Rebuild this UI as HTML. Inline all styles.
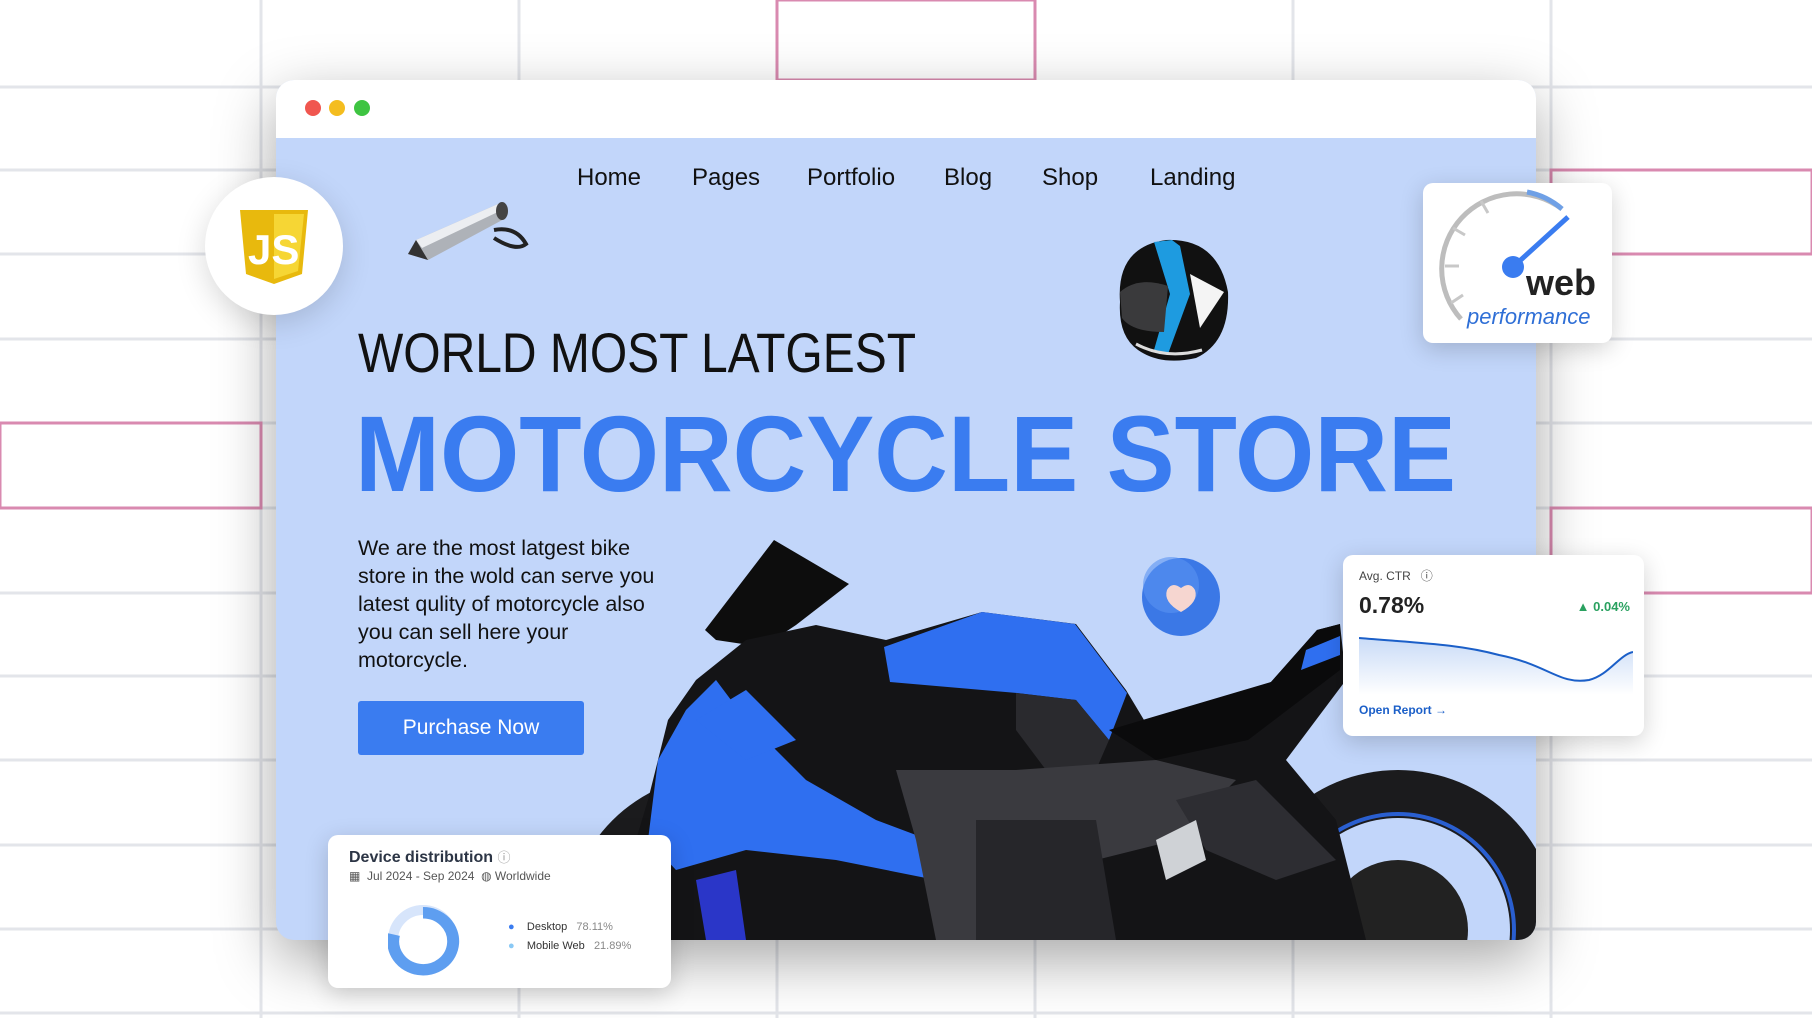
<!DOCTYPE html>
<html><head><meta charset="utf-8"><style>
*{margin:0;padding:0;box-sizing:border-box}
html,body{width:1812px;height:1018px;overflow:hidden}
body{background:#fff;position:relative;font-family:"Liberation Sans",sans-serif}
.abs{position:absolute}
.win{left:276px;top:80px;width:1260px;height:860px;border-radius:18px;overflow:hidden;background:#c2d6fa;box-shadow:0 20px 60px rgba(0,0,0,.35)}
.bar{position:absolute;left:0;top:0;width:100%;height:58px;background:#fff}
.dot{position:absolute;top:20px;width:16px;height:16px;border-radius:50%}
.nav{position:absolute;top:84px;font-size:24px;color:#111}
.card{position:absolute;background:#fff;border-radius:10px;box-shadow:0 6px 24px rgba(0,0,0,.18);overflow:hidden}
</style></head><body>
<svg class="abs" style="left:0;top:0" width="1812" height="1018">
<g stroke="#e3e5ea" stroke-width="3">
<line x1="261" y1="0" x2="261" y2="1018"/><line x1="519" y1="0" x2="519" y2="1018"/><line x1="777" y1="0" x2="777" y2="1018"/><line x1="1035" y1="0" x2="1035" y2="1018"/><line x1="1293" y1="0" x2="1293" y2="1018"/><line x1="1551" y1="0" x2="1551" y2="1018"/>
<line x1="0" y1="87" x2="1812" y2="87"/><line x1="0" y1="170" x2="1812" y2="170"/><line x1="0" y1="254" x2="1812" y2="254"/><line x1="0" y1="339" x2="1812" y2="339"/><line x1="0" y1="423" x2="1812" y2="423"/><line x1="0" y1="508" x2="1812" y2="508"/><line x1="0" y1="593" x2="1812" y2="593"/><line x1="0" y1="676" x2="1812" y2="676"/><line x1="0" y1="760" x2="1812" y2="760"/><line x1="0" y1="845" x2="1812" y2="845"/><line x1="0" y1="929" x2="1812" y2="929"/><line x1="0" y1="1013" x2="1812" y2="1013"/>
</g>
<g fill="none" stroke="#d98ab0" stroke-width="3">
<rect x="777" y="0" width="258" height="80"/><rect x="1551" y="170" width="261" height="84"/><rect x="1551" y="508" width="261" height="85"/><rect x="0" y="423" width="261" height="85"/>
</g>
</svg>

<div class="abs win">
<div class="bar"></div>
<div class="dot" style="left:29px;background:#f0564f"></div>
<div class="dot" style="left:53px;background:#f4bd1f"></div>
<div class="dot" style="left:78px;background:#3ec441"></div>
<div class="nav" style="left:301px">Home</div>
<div class="nav" style="left:416px">Pages</div>
<div class="nav" style="left:531px">Portfolio</div>
<div class="nav" style="left:668px">Blog</div>
<div class="nav" style="left:766px">Shop</div>
<div class="nav" style="left:874px">Landing</div>

<svg class="abs" style="left:0;top:0" width="1260" height="860">
<text x="82" y="292" font-family="Liberation Sans" font-size="56" fill="#111" textLength="558" lengthAdjust="spacingAndGlyphs">WORLD MOST LATGEST</text>
<text x="79" y="411" font-family="Liberation Sans" font-weight="bold" font-size="108" fill="#3a7cf0" textLength="1101" lengthAdjust="spacingAndGlyphs">MOTORCYCLE STORE</text>
<!-- exhaust -->
<g transform="translate(130,112)">
<path d="M2 62 L10 48 L92 12 L100 26 L22 68 Z" fill="#aeb2b8"/>
<path d="M10 48 L92 12 L96 18 L16 56 Z" fill="#eceef1"/>
<path d="M2 62 L10 48 L22 68Z" fill="#333"/>
<ellipse cx="96" cy="19" rx="6" ry="9" fill="#444"/>
<path d="M88 38 q22 -4 32 14 q-10 8 -32 -6" fill="none" stroke="#222" stroke-width="4"/>
</g>
<!-- helmet -->
<g transform="translate(830,152)">
<path d="M14 70 Q10 15 60 8 Q112 6 122 60 Q124 110 90 126 Q55 134 32 118 Q12 104 14 70Z" fill="#111"/>
<path d="M48 10 L66 8 L74 14 L84 62 L62 122 L48 118 L64 62Z" fill="#1e9be0"/>
<path d="M14 60 Q32 44 62 54 L58 100 Q26 100 16 86Z" fill="#3a3a3c"/>
<path d="M84 42 L118 60 L94 96Z" fill="#f4f4f4"/>
<path d="M30 112 Q60 128 96 118" fill="none" stroke="#ddd" stroke-width="3"/>
</g>
<!-- heart bubble -->
<circle cx="905" cy="517" r="39" fill="#3b78e6"/>
<circle cx="895" cy="505" r="28" fill="#5a93f2" opacity=".6"/>
<path d="M905 532 q-18 -10 -14 -22 q5 -9 14 -2 q9 -7 14 2 q4 12 -14 22z" fill="#f6d6d0"/>
<!-- motorcycle -->
<g>
<!-- rear wheel -->
<circle cx="1122" cy="850" r="160" fill="#1b1b1d"/>
<circle cx="1122" cy="850" r="112" fill="#c2d6fa"/>
<circle cx="1122" cy="850" r="116" fill="none" stroke="#2a5fd0" stroke-width="4"/>
<circle cx="1122" cy="850" r="70" fill="#222"/>
<!-- front wheel -->
<circle cx="446" cy="850" r="155" fill="#1b1b1d"/>
<circle cx="446" cy="850" r="112" fill="none" stroke="#2a5fd0" stroke-width="4"/>
<circle cx="446" cy="850" r="95" fill="#3a3a3e"/>
<!-- windscreen -->
<path d="M498 460 L573 504 L520 545 L487 567 L440 560 L429 550 Z" fill="#0d0d0d"/>
<!-- main dark mass -->
<path d="M372 720 L392 640 L420 600 L470 560 L540 545 L610 560 L706 532 L800 544 L850 610 L880 660 L995 602 L1041 550 L1064 544 L1070 600 L1010 680 L1060 740 L1090 860 L330 860 Z" fill="#141416"/>
<!-- front fairing blue -->
<path d="M372 760 L382 680 L410 630 L440 600 L470 640 L530 700 L600 740 L680 770 L720 800 L660 800 L560 780 L470 770 L400 790Z" fill="#2f6ff0"/>
<path d="M420 640 L470 610 L520 660 L470 680Z" fill="#2f6ff0"/>
<!-- tank blue -->
<path d="M608 567 L706 532 L799 544 L851 613 L833 660 L800 620 L741 613 L614 602 Z" fill="#2f6ff0"/>
<path d="M740 613 L800 620 L833 660 L820 690 L770 690 L740 650Z" fill="#2a2a2e"/>
<!-- seat -->
<path d="M833 650 L995 602 L1041 550 L1064 544 L1064 590 L972 660 L880 680 Z" fill="#0b0b0c"/>
<path d="M1030 570 L1064 556 L1064 575 L1025 590Z" fill="#2f6ff0"/>
<!-- frame / engine -->
<path d="M620 690 L740 690 L880 680 L960 700 L900 760 L820 780 L760 860 L660 860 L640 760Z" fill="#3a3a3f"/>
<path d="M700 740 L820 740 L840 860 L700 860Z" fill="#26262a"/>
<path d="M900 720 L980 700 L1060 780 L1000 800 L930 770Z" fill="#2d2d32"/>
<path d="M880 760 L920 740 L930 780 L890 800Z" fill="#cfd2d6"/>
<path d="M420 800 L460 790 L470 860 L430 860Z" fill="#2a36c8"/>
</g>
</svg>

<div class="abs" style="left:82px;top:454px;width:300px;font-size:21.5px;line-height:28px;color:#111">We are the most latgest bike store in the wold can serve you latest qulity of motorcycle also you can sell here your motorcycle.</div>
<div class="abs" style="left:82px;top:621px;width:226px;height:54px;background:#3a7cf0;border-radius:3px;color:#fff;font-size:21px;line-height:54px;text-align:center">Purchase Now</div>
</div>

<!-- JS badge -->
<div class="abs" style="left:205px;top:177px;width:138px;height:138px;border-radius:50%;background:#fff;box-shadow:0 8px 30px rgba(0,0,0,.15)"></div>
<svg class="abs" style="left:238px;top:208px" width="72" height="80"><path d="M2 2 H70 L64 66 L36 76 L8 66Z" fill="#e8b90d"/><path d="M36 6 H66 L60 63 L36 71Z" fill="#f6d634"/><text x="10" y="56" font-family="Liberation Sans" font-weight="bold" font-size="42" fill="#fff">JS</text></svg>

<!-- web perf -->
<div class="card" style="left:1423px;top:183px;width:189px;height:160px">
<svg width="189" height="160">
<path d="M38 136 A75 75 0 0 1 139 26" fill="none" stroke="#bdbdbd" stroke-width="5"/>
<path d="M104 9 A75 75 0 0 1 139 26" fill="none" stroke="#6fa0e6" stroke-width="5"/>
<g stroke="#c8c8c8" stroke-width="3"><line x1="22" y1="83" x2="36" y2="83"/><line x1="30" y1="45" x2="42" y2="52"/><line x1="58" y1="18" x2="65" y2="30"/><line x1="28" y1="120" x2="40" y2="112"/></g>
<line x1="90" y1="84" x2="145" y2="34" stroke="#3a7cf0" stroke-width="5"/>
<circle cx="90" cy="84" r="11" fill="#3a7cf0"/>
<text x="103" y="112" font-family="Liberation Sans" font-weight="bold" font-size="36" fill="#222">web</text>
<text x="44" y="141" font-family="Liberation Sans" font-style="italic" font-size="22" fill="#2f6fd6">performance</text>
</svg>
</div>

<!-- CTR card -->
<div class="card" style="left:1343px;top:555px;width:301px;height:181px">
<div class="abs" style="left:16px;top:12px;font-size:12px;color:#444">Avg. CTR &nbsp; ⓘ</div>
<div class="abs" style="left:16px;top:37px;font-size:23px;font-weight:bold;color:#222">0.78%</div>
<div class="abs" style="right:14px;top:44px;font-size:13px;font-weight:bold;color:#2aa160">▲ 0.04%</div>
<svg class="abs" style="left:16px;top:80px" width="274" height="60"><defs><linearGradient id="g" x1="0" y1="0" x2="0" y2="1"><stop offset="0" stop-color="#c9dbf7"/><stop offset="1" stop-color="#fff"/></linearGradient></defs>
<path d="M0 3 C60 8 100 9 140 20 C190 30 200 50 230 45 C250 40 260 20 274 17 L274 60 L0 60Z" fill="url(#g)"/>
<path d="M0 3 C60 8 100 9 140 20 C190 30 200 50 230 45 C250 40 260 20 274 17" fill="none" stroke="#1b5fc8" stroke-width="2"/></svg>
<div class="abs" style="left:16px;top:148px;font-size:12px;font-weight:bold;color:#1b5fc8">Open Report →</div>
</div>

<!-- Device card -->
<div class="card" style="left:328px;top:835px;width:343px;height:153px">
<div class="abs" style="left:21px;top:12px;font-size:16px;font-weight:bold;color:#2c3545">Device distribution <span style="color:#999;font-weight:normal;font-size:13px">ⓘ</span></div>
<div class="abs" style="left:21px;top:34px;font-size:12px;color:#555">▦ &nbsp;Jul 2024 - Sep 2024 &nbsp;◍ Worldwide</div>
<svg class="abs" style="left:60px;top:70px" width="80" height="80"><circle cx="35" cy="35" r="30" fill="none" stroke="#d7e5fb" stroke-width="10"/><path d="M35 5 A30 30 0 1 1 6 28" fill="none" stroke="#5e9ef0" stroke-width="12" transform="translate(0,3) scale(1 .95)"/></svg>
<div class="abs" style="left:180px;top:83px;font-size:11px;color:#333;line-height:19px"><span style="color:#3a7cf0">●</span> &nbsp;&nbsp;&nbsp;Desktop &nbsp; <span style="color:#888">78.11%</span><br><span style="color:#8ac9f5">●</span> &nbsp;&nbsp;&nbsp;Mobile Web &nbsp; <span style="color:#888">21.89%</span></div>
</div>
</body></html>
